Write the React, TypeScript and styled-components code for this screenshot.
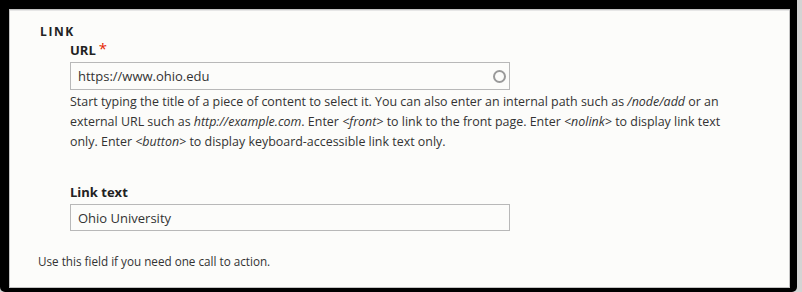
import styled, { createGlobalStyle } from "styled-components";

const GlobalStyle = createGlobalStyle`
  html, body {
    margin: 0;
    padding: 0;
    background: #d4d4d4;
  }
  body {
    font-family: "Open Sans", "Noto Sans", Arial, sans-serif;
    color: #333;
  }
`;

const Frame = styled.div`
  width: 797px;
  height: 292px;
  box-sizing: border-box;
  background: #000;
  padding: 9px 7px 4px 9px;
  border-radius: 0 0 5px 5px;
`;

const Panel = styled.fieldset`
  margin: 0;
  height: 100%;
  box-sizing: border-box;
  background: #fcfcfa;
  border: 1px solid #c4c4c4;
  box-shadow: inset 0 1px 0 #e6e6e6;
  padding: 13px 0 0 30px;
  display: flex;
  flex-direction: column;
`;

const Legend = styled.div`
  font-size: 12px;
  font-weight: 700;
  letter-spacing: 1.6px;
  text-transform: uppercase;
  color: #222;
  line-height: 18px;
`;

const Fields = styled.div`
  padding-left: 30px;
  display: flex;
  flex-direction: column;
`;

const Item = styled.div<{ $gap?: number }>`
  margin-top: ${(p) => p.$gap ?? 0}px;
  display: flex;
  flex-direction: column;
`;

const Label = styled.label`
  font-size: 13px;
  font-weight: 700;
  color: #222;
  line-height: 18px;
  margin-bottom: 3px;
`;

const Required = styled.span`
  color: #e62600;
  font-weight: 400;
  font-size: 15px;
  margin-left: 3px;
  vertical-align: top;
  line-height: 14px;
`;

const InputWrap = styled.div`
  position: relative;
  width: 440px;
`;

const Input = styled.input<{ $h: number }>`
  width: 100%;
  height: ${(p) => p.$h}px;
  box-sizing: border-box;
  border: 1px solid #b8b8b8;
  background: #fcfcfa;
  padding: 0 28px 0 7px;
  font-family: "Open Sans", "Noto Sans", Arial, sans-serif;
  font-size: 13px;
  color: #333;
  outline: none;
`;

const Throbber = styled.span`
  position: absolute;
  right: 4px;
  top: 50%;
  width: 9px;
  height: 9px;
  margin-top: -6px;
  border: 2px solid #9a9a9a;
  border-radius: 50%;
`;

const Description = styled.div`
  font-size: 12.45px;
  line-height: 20px;
  color: #333;
  margin-top: 2px;
  width: 670px;
`;

const FooterNote = styled.div`
  font-size: 11.7px;
  line-height: 20px;
  color: #333;
  margin-top: 20px;
  margin-left: -2px;
`;

export default function App() {
  return (
    <>
      <GlobalStyle />
      <Frame>
        <Panel>
          <Legend>Link</Legend>
          <Fields>
            <Item>
              <Label>
                URL<Required>*</Required>
              </Label>
              <InputWrap>
                <Input $h={28} defaultValue="https://www.ohio.edu" />
                <Throbber />
              </InputWrap>
              <Description>
                Start typing the title of a piece of content to select it. You can also enter an internal path such as{" "}
                <em>/node/add</em> or an external URL such as <em>http://example.com</em>. Enter{" "}
                <em>&lt;front&gt;</em> to link to the front page. Enter <em>&lt;nolink&gt;</em> to display link text
                only. Enter <em>&lt;button&gt;</em> to display keyboard-accessible link text only.
              </Description>
            </Item>
            <Item $gap={31}>
              <Label>Link text</Label>
              <InputWrap>
                <Input $h={27} defaultValue="Ohio University" />
              </InputWrap>
            </Item>
          </Fields>
          <FooterNote>Use this field if you need one call to action.</FooterNote>
        </Panel>
      </Frame>
    </>
  );
}
